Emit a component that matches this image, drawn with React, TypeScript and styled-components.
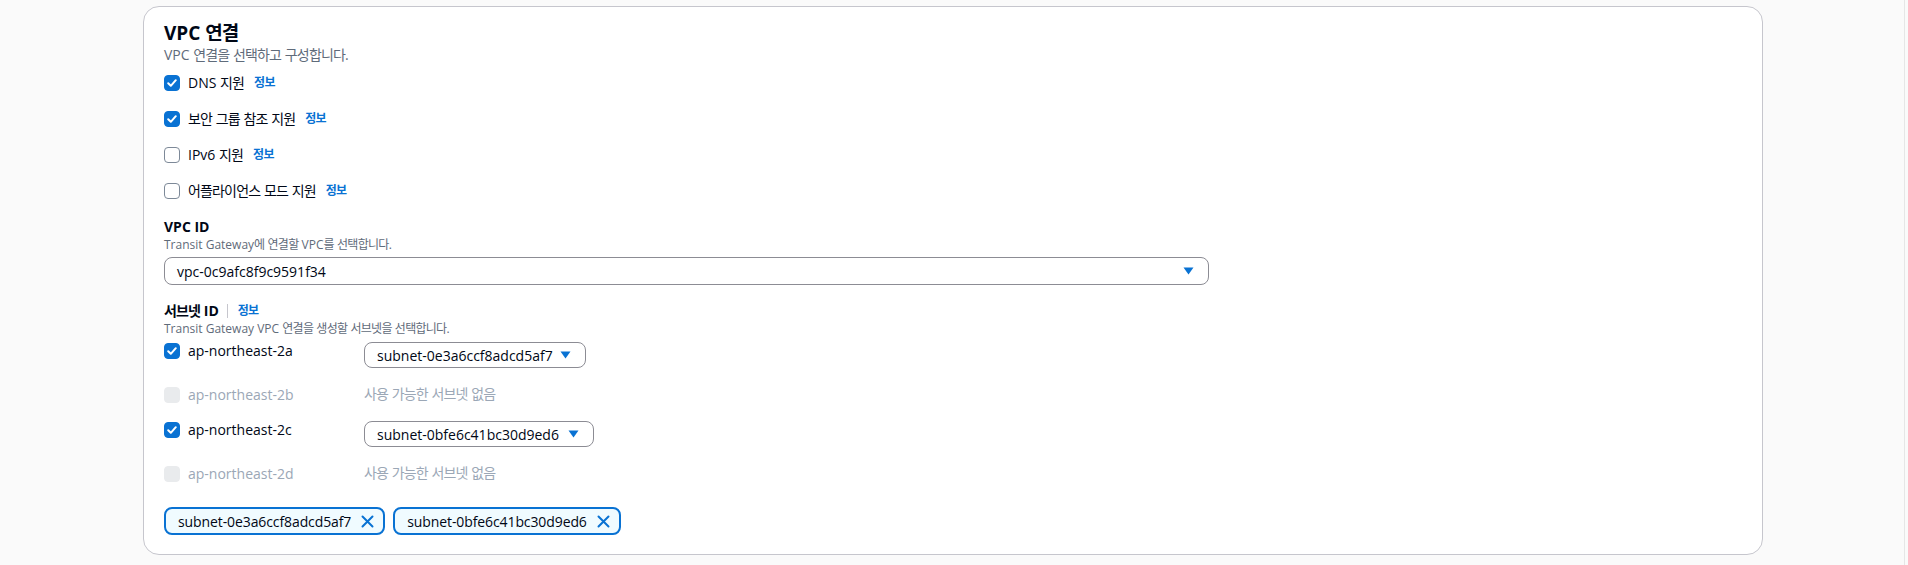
import React from "react";
import styled, { createGlobalStyle } from "styled-components";

const Global = createGlobalStyle`
  html, body { margin: 0; padding: 0; }
  body {
    background: #fafafa;
    font-family: "Open Sans", "Noto Sans CJK KR", sans-serif;
    color: #000716;
    -webkit-font-smoothing: antialiased;
  }
`;

const Hangul = styled.span`
  letter-spacing: -0.06em;
`;

function Txt({ children }: { children: string }) {
  const parts = children.split(/([\u3131-\uD7A3]+)/);
  return (
    <>
      {parts.map((p, i) =>
        /[\u3131-\uD7A3]/.test(p) ? <Hangul key={i}>{p}</Hangul> : <React.Fragment key={i}>{p}</React.Fragment>
      )}
    </>
  );
}

const Page = styled.div`
  width: 1905px;
  height: 565px;
  box-sizing: border-box;
  border-right: 1px solid #e6e6e6;
  padding: 6px 0 0 143px;
`;

const Card = styled.section`
  width: 1620px;
  height: 549px;
  box-sizing: border-box;
  background: #ffffff;
  border: 1px solid #c6c6cd;
  border-radius: 16px;
  padding: 14px 20px 0 20px;
  display: flex;
  flex-direction: column;
`;

const Title = styled.h2`
  margin: 0;
  font-size: 19px;
  line-height: 24px;
  font-weight: 700;
  color: #000716;
`;

const Desc = styled.div<{ $small?: boolean }>`
  font-size: ${(p) => (p.$small ? "12px" : "14px")};
  line-height: ${(p) => (p.$small ? "16px" : "20px")};
  color: #5f6b7a;
`;

const CheckList = styled.div`
  display: flex;
  flex-direction: column;
  gap: 16px;
  margin-top: 8px;
`;

const CheckRow = styled.label`
  display: flex;
  align-items: center;
  gap: 8px;
  height: 20px;
  font-size: 14px;
  line-height: 20px;
`;

const Box = styled.span<{ $checked?: boolean; $disabled?: boolean }>`
  width: 16px;
  height: 16px;
  box-sizing: border-box;
  border-radius: 4px;
  flex: none;
  display: inline-flex;
  align-items: center;
  justify-content: center;
  background: ${(p) => (p.$disabled ? "#e9ebed" : p.$checked ? "#0972d3" : "#ffffff")};
  border: ${(p) => (p.$disabled ? "1px solid #e9ebed" : p.$checked ? "1px solid #0972d3" : "1px solid #7d8998")};
`;

const LabelText = styled.span<{ $disabled?: boolean }>`
  color: ${(p) => (p.$disabled ? "#9ba7b6" : "#000716")};
  white-space: nowrap;
`;

const Info = styled.a`
  font-size: 12px;
  font-weight: 700;
  color: #0972d3;
  text-decoration: none;
  margin-left: 2px;
  line-height: 16px;
`;

const FieldLabel = styled.div<{ $top: number }>`
  margin-top: ${(p) => p.$top}px;
  display: flex;
  align-items: center;
  gap: 8px;
  font-size: 14px;
  line-height: 20px;
  font-weight: 700;
`;

const Divider = styled.span`
  width: 1px;
  height: 14px;
  background: #c6c6cd;
`;

const SelectWrap = styled.div`
  margin-top: 4px;
`;

const Select = styled.div<{ $width: number; $height: number }>`
  width: ${(p) => p.$width}px;
  height: ${(p) => p.$height}px;
  box-sizing: border-box;
  border: 1px solid #8c8c94;
  border-radius: 8px;
  display: flex;
  align-items: center;
  justify-content: space-between;
  padding: 0 14px 0 12px;
  font-size: 14px;
  color: #000716;
  flex: none;
`;

const Caret = () => (
  <svg width="11" height="8" viewBox="0 0 11 8">
    <path d="M0.5 0.5 H10.5 L5.5 7.5 Z" fill="#0972d3" />
  </svg>
);

const Check = () => (
  <svg width="12" height="12" viewBox="0 0 12 12">
    <path d="M2.2 6.2 L4.8 8.8 L9.8 3.2" fill="none" stroke="#fff" strokeWidth="2" strokeLinecap="round" strokeLinejoin="round" />
  </svg>
);

const SubnetList = styled.div`
  display: flex;
  flex-direction: column;
  gap: 17px;
  margin-top: 5px;
`;

const SubnetRow = styled.div`
  display: grid;
  grid-template-columns: 200px auto;
  align-items: start;
`;

const AzCell = styled.div<{ $disabled?: boolean }>`
  display: flex;
  align-items: center;
  gap: 8px;
  height: 18px;
  margin-top: ${(p) => (p.$disabled ? 1 : 0)}px;
  font-size: 14px;
  line-height: 20px;
`;

const Empty = styled.div`
  font-size: 14px;
  line-height: 20px;
  color: #9ba7b6;
  margin-top: -1px;
`;

const TokenList = styled.div`
  display: flex;
  gap: 8px;
  margin-top: 24px;
`;

const Token = styled.div`
  height: 28px;
  box-sizing: border-box;
  border: 2px solid #0972d3;
  border-radius: 8px;
  background: #f0fbff;
  display: flex;
  align-items: center;
  gap: 10px;
  padding: 0 9px 0 12px;
  font-size: 14px;
  letter-spacing: -0.1px;
  color: #000716;
`;

const XIcon = () => (
  <svg width="13" height="13" viewBox="0 0 13 13">
    <path d="M1.5 1.5 L11.5 11.5 M11.5 1.5 L1.5 11.5" stroke="#0972d3" strokeWidth="2" strokeLinecap="round" />
  </svg>
);

const options = [
  { label: "DNS 지원", checked: true },
  { label: "보안 그룹 참조 지원", checked: true },
  { label: "IPv6 지원", checked: false },
  { label: "어플라이언스 모드 지원", checked: false },
];

const subnets = [
  { az: "ap-northeast-2a", subnet: "subnet-0e3a6ccf8adcd5af7", width: 222 },
  { az: "ap-northeast-2b", subnet: null, width: 0 },
  { az: "ap-northeast-2c", subnet: "subnet-0bfe6c41bc30d9ed6", width: 230 },
  { az: "ap-northeast-2d", subnet: null, width: 0 },
];

export default function App() {
  return (
    <>
      <Global />
      <Page>
        <Card>
          <Title>
            <Txt>VPC 연결</Txt>
          </Title>
          <Desc>
            <Txt>VPC 연결을 선택하고 구성합니다.</Txt>
          </Desc>
          <CheckList>
            {options.map((o) => (
              <CheckRow key={o.label}>
                <Box $checked={o.checked}>{o.checked && <Check />}</Box>
                <LabelText>
                  <Txt>{o.label}</Txt>
                </LabelText>
                <Info>
                  <Txt>정보</Txt>
                </Info>
              </CheckRow>
            ))}
          </CheckList>

          <FieldLabel $top={16}>VPC ID</FieldLabel>
          <Desc $small>
            <Txt>Transit Gateway에 연결할 VPC를 선택합니다.</Txt>
          </Desc>
          <SelectWrap>
            <Select $width={1045} $height={28}>
              <span>vpc-0c9afc8f9c9591f34</span>
              <Caret />
            </Select>
          </SelectWrap>

          <FieldLabel $top={16}>
            <span>
              <Txt>서브넷 ID</Txt>
            </span>
            <Divider />
            <Info>
              <Txt>정보</Txt>
            </Info>
          </FieldLabel>
          <Desc $small>
            <Txt>Transit Gateway VPC 연결을 생성할 서브넷을 선택합니다.</Txt>
          </Desc>
          <SubnetList>
            {subnets.map((s) => (
              <SubnetRow key={s.az}>
                <AzCell $disabled={!s.subnet}>
                  <Box $checked={!!s.subnet} $disabled={!s.subnet}>
                    {s.subnet && <Check />}
                  </Box>
                  <LabelText $disabled={!s.subnet}>{s.az}</LabelText>
                </AzCell>
                {s.subnet ? (
                  <Select $width={s.width} $height={26}>
                    <span>{s.subnet}</span>
                    <Caret />
                  </Select>
                ) : (
                  <Empty>
                    <Txt>사용 가능한 서브넷 없음</Txt>
                  </Empty>
                )}
              </SubnetRow>
            ))}
          </SubnetList>

          <TokenList>
            <Token>
              subnet-0e3a6ccf8adcd5af7
              <XIcon />
            </Token>
            <Token>
              subnet-0bfe6c41bc30d9ed6
              <XIcon />
            </Token>
          </TokenList>
        </Card>
      </Page>
    </>
  );
}
